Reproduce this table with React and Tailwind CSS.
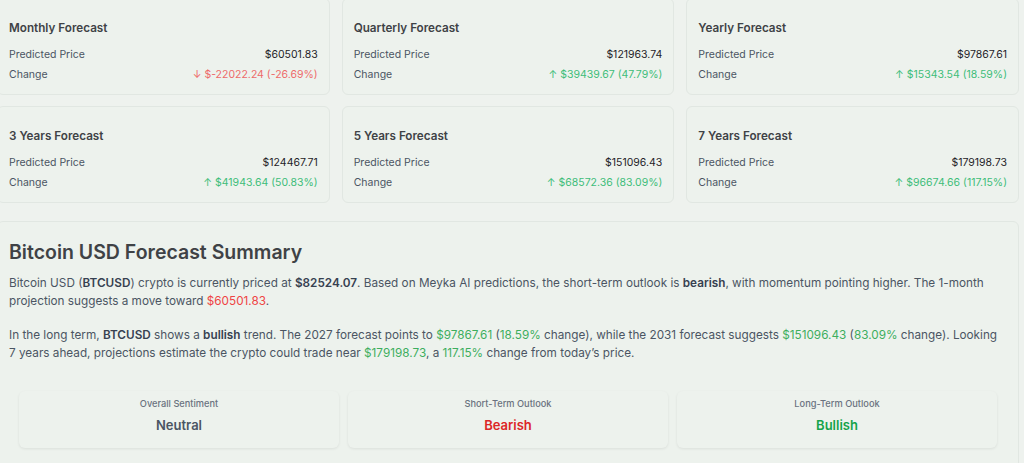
import React from 'react';

const forecasts = [
  { title: 'Monthly Forecast', price: '$60501.83', change: '$-22022.24 (-26.69%)', up: false },
  { title: 'Quarterly Forecast', price: '$121963.74', change: '$39439.67 (47.79%)', up: true },
  { title: 'Yearly Forecast', price: '$97867.61', change: '$15343.54 (18.59%)', up: true },
  { title: '3 Years Forecast', price: '$124467.71', change: '$41943.64 (50.83%)', up: true },
  { title: '5 Years Forecast', price: '$151096.43', change: '$68572.36 (83.09%)', up: true },
  { title: '7 Years Forecast', price: '$179198.73', change: '$96674.66 (117.15%)', up: true },
];

const sentiments = [
  { label: 'Overall Sentiment', value: 'Neutral', color: 'text-[#4b5563]' },
  { label: 'Short-Term Outlook', value: 'Bearish', color: 'text-[#dc2626]' },
  { label: 'Long-Term Outlook', value: 'Bullish', color: 'text-[#16a34a]' },
];

const ForecastCard = ({ title, price, change, up }) => (
  <div className="rounded-[6px] border border-[#e1e7e2] bg-[#edf2ed] px-[11px] pt-[20px] pb-[12px]">
    <h3 className="text-[11.7px] leading-[18px] font-semibold text-[#3f4246] mb-[10px]">{title}</h3>
    <div className="flex flex-col gap-[5px] text-[10.5px] leading-[15px]">
      <div className="flex justify-between">
        <span className="text-[#4b5563]">Predicted Price</span>
        <span className="text-[#1f2328]">{price}</span>
      </div>
      <div className="flex justify-between">
        <span className="text-[#4b5563]">Change</span>
        <span className={up ? 'text-[#3dbd79]' : 'text-[#ee6a6a]'}>
          {up ? '↑' : '↓'} {change}
        </span>
      </div>
    </div>
  </div>
);

export default function App() {
  return (
    <div className="min-h-[463px] bg-[#eef2ee] overflow-hidden" style={{ fontFamily: 'Inter, "Noto Sans", sans-serif' }}>
      <div className="w-[1022px] -ml-[3px] -mt-[2px]">
        <div className="grid grid-cols-3 gap-x-[12px] gap-y-[11px]">
          {forecasts.map((f) => (
            <ForecastCard key={f.title} {...f} />
          ))}
        </div>

        <div className="mt-[18px] rounded-[6px] border border-[#e1e7e2] bg-[#edf2ed] pt-[18px] px-[11px] pb-6">
          <h2 className="text-[19.5px] leading-[24px] font-semibold text-[#3f4246] mb-[10px]">
            Bitcoin USD Forecast Summary
          </h2>
          <p className="text-[11.75px] leading-[18px] text-[#4b5563] mb-[16px]">
            Bitcoin USD (<b className="font-semibold text-[#374151]">BTCUSD</b>) crypto is currently priced at{' '}
            <b className="font-semibold text-[#374151]">$82524.07</b>. Based on Meyka AI predictions, the short-term outlook is{' '}
            <b className="font-semibold text-[#374151]">bearish</b>, with momentum pointing higher. The 1-month projection suggests a move toward{' '}
            <span className="text-[#ef4444]">$60501.83</span>.
          </p>
          <p className="text-[11.75px] leading-[18px] text-[#4b5563]">
            In the long term, <b className="font-semibold text-[#374151]">BTCUSD</b> shows a{' '}
            <b className="font-semibold text-[#374151]">bullish</b> trend. The 2027 forecast points to{' '}
            <span className="text-[#3dae5e]">$97867.61</span> (<span className="text-[#3dae5e]">18.59%</span> change), while the 2031 forecast suggests{' '}
            <span className="text-[#3dae5e]">$151096.43</span> (<span className="text-[#3dae5e]">83.09%</span> change). Looking 7 years ahead, projections estimate the crypto could trade near{' '}
            <span className="text-[#3dae5e]">$179198.73</span>, a <span className="text-[#3dae5e]">117.15%</span> change from today’s price.
          </p>

          <div className="grid grid-cols-3 gap-[9px] pl-[10px] pr-[10px] mt-[29px]">
            {sentiments.map((s) => (
              <div
                key={s.label}
                className="rounded-[6px] bg-[#edf2ed] shadow-[0_1px_3px_rgba(0,0,0,0.08)] h-[57px] flex flex-col items-center pt-[7px]"
              >
                <span className="text-[9.25px] leading-[12px] font-medium text-[#6b7280]">{s.label}</span>
                <span className={`text-[13px] leading-[20px] font-semibold mt-[5px] ${s.color}`}>{s.value}</span>
              </div>
            ))}
          </div>
        </div>
      </div>
    </div>
  );
}
